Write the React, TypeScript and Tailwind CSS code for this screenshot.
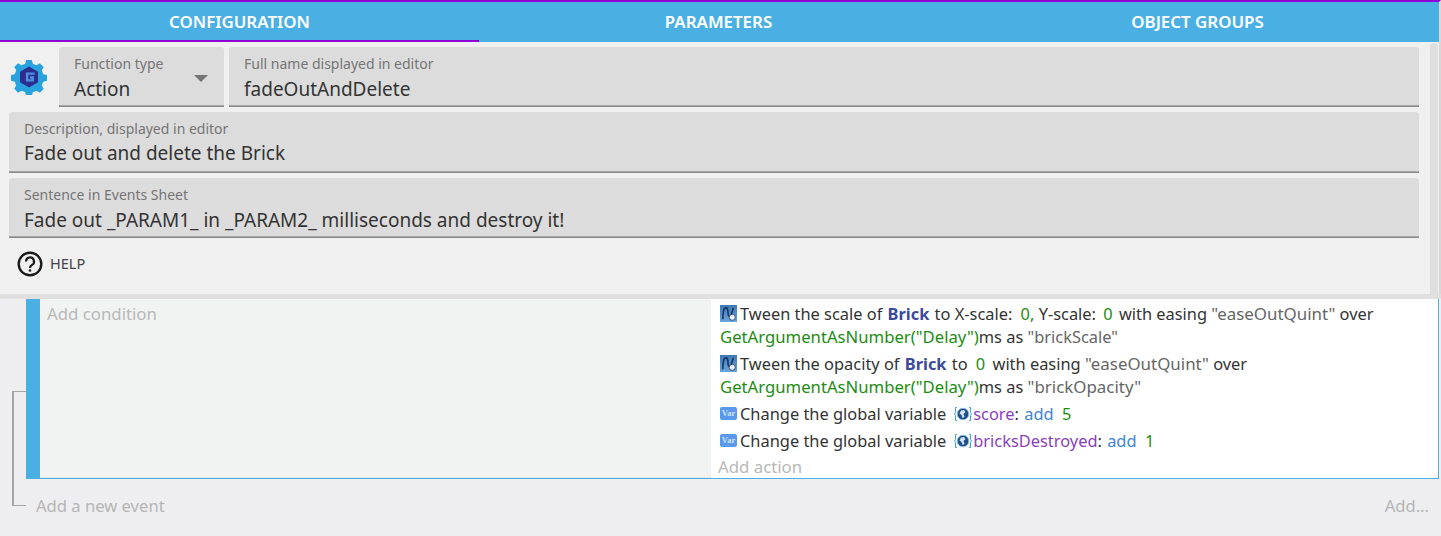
import React from "react";

const sans = "font-['Noto_Sans','Open_Sans',sans-serif]";

function Field({ label, value, className = "", valueClass = "top-[30px]" }: { label: string; value: string; className?: string; valueClass?: string }) {
  return (
    <div className={`relative rounded-t-[4px] bg-[#dcdcdc] border-b border-[#8a8a8a] shadow-[inset_0_-1px_0_#a5a5a5] ${className}`}>
      <div className="absolute left-[15px] top-[8px] text-[14px] leading-[18px] text-[#757575]">{label}</div>
      <div className={`absolute left-[15px] text-[19px] leading-[24px] text-[#333333] ${valueClass}`}>{value}</div>
    </div>
  );
}

function TweenIcon() {
  return (
    <svg width="17" height="17" viewBox="0 0 18 18" className="ml-[2px] mr-[3px] shrink-0">
      <defs>
        <linearGradient id="tw" x1="0" y1="0" x2="0" y2="1">
          <stop offset="0" stopColor="#3f78b5" />
          <stop offset="1" stopColor="#6aa5dc" />
        </linearGradient>
      </defs>
      <rect width="18" height="18" fill="url(#tw)" />
      <path d="M3 15C3 7 4 2 7 3c3 2 0 9 3 9 2 0 3-5 4-9" fill="none" stroke="#16305c" strokeWidth="1.6" />
      <circle cx="13" cy="13" r="3.200" fill="#eef3fa" stroke="#16305c" strokeWidth="0.8" />
    </svg>
  );
}

function VarIcon() {
  return (
    <div className="ml-[2px] mr-[3px] flex h-[13px] w-[17px] shrink-0 items-center justify-center rounded-[2px] bg-[#5a98ec] font-['Liberation_Serif',serif] text-[8.5px] font-bold leading-none text-[#cfe2fb]">
      Var
    </div>
  );
}

function GlobeIcon() {
  return (
    <svg width="18" height="18" viewBox="0 0 18 18" className="ml-[8px] mr-[1px] shrink-0">
      <path d="M3 2.500H1.500v5L.5 9l1 1.500v5H3M15 2.500h1.500v5l1 1.500-1 1.500v5H15" fill="none" stroke="#35a8e0" strokeWidth="1" />
      <circle cx="9" cy="9" r="5.800" fill="#1f4f8a" />
      <circle cx="9" cy="9" r="5.800" fill="none" stroke="#8fb8d8" strokeWidth="1" />
      <path d="M7 5.500l3-.5 1.500 2-2 2 1 3-2 1-1-3-2-1.500z" fill="#d5e4f2" />
    </svg>
  );
}

const G = ({ children, className = "" }: { children: React.ReactNode; className?: string }) => <span className={`text-[#1e8c12] ${className}`}>{children}</span>;
const S = ({ children }: { children: React.ReactNode }) => <span className="text-[16.900px] text-[#666666]">{children}</span>;
const B = ({ children }: { children: React.ReactNode }) => <span className="ml-[1px] mr-[1px] font-bold text-[#3a4a9c]">{children}</span>;
const L = ({ children }: { children: React.ReactNode }) => <span className="ml-[1px] text-[#3d85d6]">{children}</span>;
const P = ({ children }: { children: React.ReactNode }) => <span className="text-[#8a3fb8]">{children}</span>;

export default function App() {
  return (
    <div className={`relative flex h-[536px] w-full flex-col overflow-hidden bg-[#eeeef0] ${sans}`}>
      {/* Tabs */}
      <div className="flex h-[42px] shrink-0 border-t-2 border-r-2 border-[#8e00d4] border-r-[#d8d8d8] bg-[#4ab0e4] pr-[2px]">
        {["CONFIGURATION", "PARAMETERS", "OBJECT GROUPS"].map((t, i) => (
          <div key={t} className="relative flex flex-1 items-center justify-center text-[16.900px] font-semibold text-white">
            {t}
            {i === 0 ? <div className="absolute bottom-0 left-0 right-0 h-[2px] bg-[#8e00d4]" /> : null}
          </div>
        ))}
      </div>

      {/* Config panel */}
      <div className="relative flex h-[252px] shrink-0 flex-col bg-[#f0f0f0] pl-[9px] pr-[22px] pt-[5px]">
        <div className="flex h-[60px] items-start">
          <svg width="36" height="36" viewBox="0 0 38 38" className="ml-[2px] mt-[12px] shrink-0">
            <path
              d="M16 1h6l1 4 4 1.500 3.500-2 4 4-2 3.500 1.500 4 4 1v6l-4 1-1.500 4 2 3.500-4 4-3.500-2-4 1.500-1 4h-6l-1-4-4-1.500-3.500 2-4-4 2-3.500-1.500-4-4-1v-6l4-1 1.500-4-2-3.500 4-4 3.500 2 4-1.500z"
              fill="#29a3e0"
            />
            <path d="M19 8l9.500 5.500v11L19 30l-9.500-5.500v-11z" fill="#2a2f8f" />
            <path d="M25 15.500h-8v7h6v-3h-3" fill="none" stroke="#4f8fe0" strokeWidth="2.500" />
          </svg>
          <div className="relative ml-[12px] h-[60px] w-[165px] shrink-0">
            <Field label="Function type" value="Action" className="h-[60px]" />
            <div className="absolute right-[16px] top-[28px] h-0 w-0 border-x-[7px] border-t-[7px] border-x-transparent border-t-[#757575]" />
          </div>
          <Field label="Full name displayed in editor" value="fadeOutAndDelete" className="ml-[5px] h-[60px] flex-1" />
        </div>
        <Field label="Description, displayed in editor" value="Fade out and delete the Brick" className="mt-[5px] h-[61px]" valueClass="top-[29px]" />
        <Field label="Sentence in Events Sheet" value="Fade out _PARAM1_ in _PARAM2_ milliseconds and destroy it!" className="mt-[5px] h-[60px]" />
        <div className="mt-[13px] flex items-center pl-[8px]">
          <svg width="26" height="26" viewBox="0 0 26 26">
            <circle cx="13" cy="13" r="11.300" fill="none" stroke="#1a1a1a" strokeWidth="2.400" />
            <path d="M9 10.500a4 4 0 1 1 6 3.400c-1.400.8-2 1.400-2 3" fill="none" stroke="#1a1a1a" strokeWidth="2.200" />
            <circle cx="13" cy="19.500" r="1.300" fill="#1a1a1a" />
          </svg>
          <span className="ml-[7px] text-[14.500px] text-[#444444]">HELP</span>
        </div>
        {/* Scrollbar */}
        <div className="absolute right-[3px] top-[1px] h-[251px] w-[8px] rounded-t-[4px] bg-[#dfdfdf]" />
        <div className="absolute right-0 top-0 h-[252px] w-[2px] bg-[#d8d8d8]" />
      </div>

      {/* Divider */}
      <div className="h-[5px] shrink-0 bg-[#e0e0e0]" />

      {/* Events */}
      <div className="relative flex-1 text-[16.400px] leading-[23px]">
        <div className="absolute left-[12px] top-[92px] h-[115px] w-[14px] border-b border-l-2 border-t border-[#a5a5a5]" />
        <div className="ml-[26px] mr-[2px] flex h-[180px] border-b border-r border-[#4ab0e4] bg-white">
          <div className="w-[14px] shrink-0 bg-[#4ab0e4]" />
          <div className="w-[671px] shrink-0 border-b border-[#e3e5e5] bg-[#f1f3f3] pl-[7px] pt-[3px] text-[16.800px] text-[#b8b8b8]">Add condition</div>
          <div className="ml-[1px] flex-1 pl-[6px] pt-[3px] text-[#333333]">
            <div className="pb-[4px]">
              <div className="flex items-center whitespace-pre">
                <TweenIcon />
                Tween the scale of <B>Brick</B> to X-scale: <G className="ml-[4px]">0,</G> Y-scale: <G className="ml-[3px]">0</G><span className="ml-[2px]"> with easing </span><S>"easeOutQuint"</S> over
              </div>
              <div className="pl-[2px]">
                <G className="text-[16.700px]">GetArgumentAsNumber("Delay")</G>ms as <span className="text-[#666666]">"brickScale"</span>
              </div>
            </div>
            <div className="pb-[4px]">
              <div className="flex items-center whitespace-pre">
                <TweenIcon />
                Tween the opacity of <B>Brick</B> to <G className="ml-[4px]">0</G><span className="ml-[3px]"> with easing </span><S>"easeOutQuint"</S> over
              </div>
              <div className="pl-[2px]">
                <G className="text-[16.700px]">GetArgumentAsNumber("Delay")</G>ms as <S>"brickOpacity"</S>
              </div>
            </div>
            <div className="flex items-center pb-[4px]">
              <VarIcon />
              <span className="whitespace-pre">Change the global variable</span>
              <GlobeIcon />
              <span className="whitespace-pre"><P>score</P>: <L>add</L>  <G>5</G></span>
            </div>
            <div className="flex items-center pb-[3px]">
              <VarIcon />
              <span className="whitespace-pre">Change the global variable</span>
              <GlobeIcon />
              <span className="whitespace-pre"><P>bricksDestroyed</P>: <L>add</L>  <G>1</G></span>
            </div>
            <div className="text-[16.800px] text-[#b8b8b8]">Add action</div>
          </div>
        </div>
        <div className="flex items-center justify-between pl-[36px] pr-[12px] pt-[15px] text-[16.600px] text-[#b5b5b5]">
          <span>Add a new event</span>
          <span>Add...</span>
        </div>
      </div>
    </div>
  );
}
